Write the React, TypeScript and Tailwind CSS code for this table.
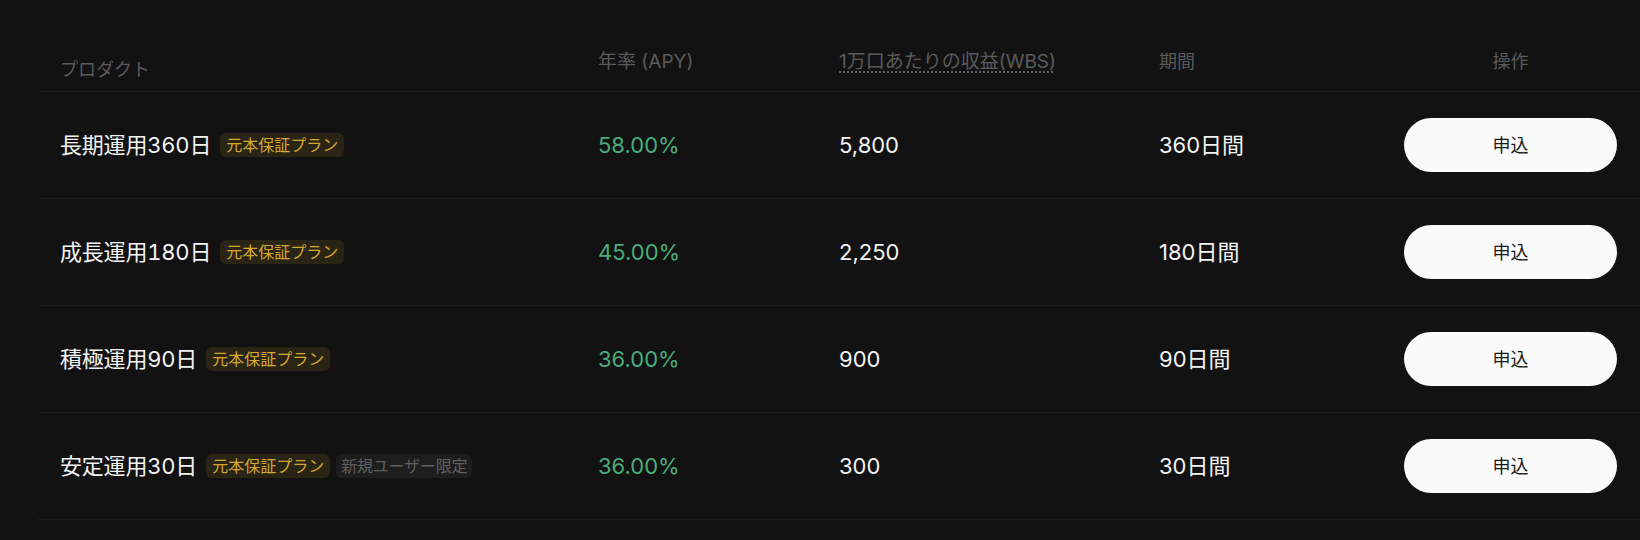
import React from "react";

type Row = {
  name: string;
  extra?: string;
  apy: string;
  wbs: string;
  period: string;
};

const rows: Row[] = [
  { name: "長期運用360日", apy: "58.00%", wbs: "5,800", period: "360日間" },
  { name: "成長運用180日", apy: "45.00%", wbs: "2,250", period: "180日間" },
  { name: "積極運用90日", apy: "36.00%", wbs: "900", period: "90日間" },
  { name: "安定運用30日", extra: "新規ユーザー限定", apy: "36.00%", wbs: "300", period: "30日間" },
];

const font = { fontFamily: '"Inter", "Noto Sans CJK JP", sans-serif' };

export default function App() {
  return (
    <div className="w-[1640px] h-[540px] bg-[#121212] overflow-hidden" style={font}>
      <div className="ml-[38px]">
        <div className="grid grid-cols-[538px_241px_320px_240px_1fr] h-[92px] border-b border-[#1c1c1c] text-[18px] leading-[27px] text-[#5a5a5a]">
          <div className="pl-[22px] pt-[56px]">プロダクト</div>
          <div className="pl-[22px] pt-[48px] text-[19px]">年率 (APY)</div>
          <div className="pl-[22px] pt-[48px] text-[19px]">
            <span className="underline decoration-dotted decoration-[#666] underline-offset-[4px]">1万口あたりの収益(WBS)</span>
          </div>
          <div className="pl-[22px] pt-[48px]">期間</div>
          <div className="flex justify-end pr-[23px] pt-[48px]">
            <div className="w-[213px] text-center">操作</div>
          </div>
        </div>
        {rows.map((r) => (
          <div
            key={r.name}
            className="grid grid-cols-[538px_241px_320px_240px_1fr] h-[107px] border-b border-[#1c1c1c] items-center text-[22px] text-[#f2f2f2]"
          >
            <div className="pl-[22px] flex items-center">
              <span className="tracking-[-0.2px] tabular-nums">{r.name}</span>
              <span className="ml-[9px] h-[24px] px-[6px] rounded-[6px] bg-[#2a2415] text-[#d6a830] text-[16px] leading-[24px]">
                元本保証プラン
              </span>
              {r.extra && (
                <span className="ml-[6px] h-[24px] px-[5px] rounded-[6px] bg-[#1e1e1e] text-[#5e5e5e] text-[16px] leading-[24px] tracking-[-0.2px]">
                  {r.extra}
                </span>
              )}
            </div>
            <div className="pl-[22px] text-[#48ad7b]">{r.apy}</div>
            <div className="pl-[22px]">{r.wbs}</div>
            <div className="pl-[22px]">{r.period}</div>
            <div className="flex justify-end pr-[23px]">
              <button className="w-[213px] h-[54px] rounded-full bg-[#fafafa] text-[#1a1a1a] text-[18px]">
                申込
              </button>
            </div>
          </div>
        ))}
      </div>
    </div>
  );
}
